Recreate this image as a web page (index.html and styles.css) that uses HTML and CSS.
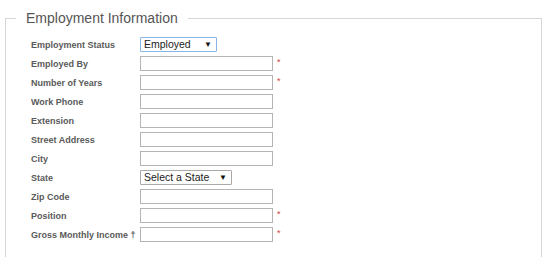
FILE: index.html
```html
<!DOCTYPE html>
<html>
<head>
<meta charset="utf-8">
<link rel="stylesheet" href="styles.css">
</head>
<body>
<fieldset class="box">
  <legend class="title">Employment Information</legend>
  <div class="form">
    <div class="label">Employment Status</div>
    <div class="field"><span class="select select-focus" style="width:77px">Employed</span></div>
    <div class="label">Employed By</div>
    <div class="field"><span class="input"></span><span class="req">*</span></div>
    <div class="label">Number of Years</div>
    <div class="field"><span class="input"></span><span class="req">*</span></div>
    <div class="label">Work Phone</div>
    <div class="field"><span class="input"></span></div>
    <div class="label">Extension</div>
    <div class="field"><span class="input"></span></div>
    <div class="label">Street Address</div>
    <div class="field"><span class="input"></span></div>
    <div class="label">City</div>
    <div class="field"><span class="input"></span></div>
    <div class="label">State</div>
    <div class="field"><span class="select" style="width:92px">Select a State</span></div>
    <div class="label">Zip Code</div>
    <div class="field"><span class="input"></span></div>
    <div class="label">Position</div>
    <div class="field"><span class="input"></span><span class="req">*</span></div>
    <div class="label">Gross Monthly Income †</div>
    <div class="field"><span class="input"></span><span class="req">*</span></div>
  </div>
</fieldset>
</body>
</html>
```
FILE: styles.css
```css
html, body {
  margin: 0;
  padding: 0;
  background: #fff;
}
body {
  font-family: "Liberation Sans", Arial, sans-serif;
  overflow: hidden;
}
.box {
  margin: 10px 8px 0 5px;
  padding: 0 10px 40px 10px;
  border: 1px solid #d6d6d6;
  min-width: 0;
}
.title {
  padding: 0 10px;
  font-size: 14px;
  line-height: 17px;
  color: #555;
}
.form {
  display: grid;
  grid-template-columns: 109px auto;
  row-gap: 4px;
  margin-top: 10px;
  padding-left: 15px;
}
.label {
  font-size: 9px;
  font-weight: bold;
  color: #5a5a5a;
  height: 15px;
  display: flex;
  align-items: center;
  white-space: nowrap;
}
.field {
  height: 15px;
  display: flex;
  align-items: flex-start;
}
.input {
  display: block;
  box-sizing: border-box;
  width: 133px;
  height: 15px;
  border: 1px solid #b4b4b4;
  background: #fff;
}
.req {
  color: #d04040;
  font-size: 9px;
  line-height: 9px;
  margin-left: 4px;
  margin-top: 2px;
}
.select {
  position: relative;
  display: block;
  box-sizing: border-box;
  height: 15px;
  border: 1px solid #a9a9a9;
  border-radius: 1px;
  font-size: 10.5px;
  line-height: 13px;
  padding-left: 3px;
  color: #222;
  background: #fff;
}
.select-focus {
  border-color: #8ab4e6;
}
.select::after {
  content: "▼";
  position: absolute;
  right: 4px;
  top: 0;
  font-size: 8px;
  line-height: 13px;
  color: #111;
}
```
